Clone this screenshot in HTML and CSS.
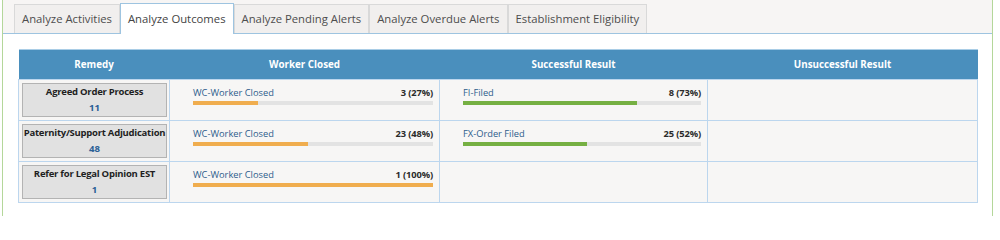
FILE: index.html
```html
<!DOCTYPE html>
<html>
<head>
<meta charset="utf-8">
<link rel="stylesheet" href="styles.css">
</head>
<body>
<div class="panel">
  <div class="tabs">
    <div class="tab">Analyze Activities</div>
    <div class="tab active">Analyze Outcomes</div>
    <div class="tab">Analyze Pending Alerts</div>
    <div class="tab">Analyze Overdue Alerts</div>
    <div class="tab">Establishment Eligibility</div>
  </div>
  <div class="content">
    <table class="outcomes">
      <colgroup>
        <col class="c-remedy">
        <col class="c-data">
        <col class="c-data2">
        <col class="c-data">
      </colgroup>
      <thead>
        <tr>
          <th>Remedy</th>
          <th>Worker Closed</th>
          <th>Successful Result</th>
          <th>Unsuccessful Result</th>
        </tr>
      </thead>
      <tbody>
        <tr>
          <td class="remedy"><div class="rbox"><div class="rname">Agreed Order Process</div><div class="rnum">11</div></div></td>
          <td class="bar-cell">
            <div class="bar-head"><span class="blabel">WC-Worker Closed</span><span class="bcount">3 (27%)</span></div>
            <div class="track"><div class="fill orange" style="width:27%"></div></div>
          </td>
          <td class="bar-cell">
            <div class="bar-head"><span class="blabel">FI-Filed</span><span class="bcount">8 (73%)</span></div>
            <div class="track"><div class="fill green" style="width:73%"></div></div>
          </td>
          <td class="bar-cell"></td>
        </tr>
        <tr>
          <td class="remedy"><div class="rbox"><div class="rname">Paternity/Support Adjudication</div><div class="rnum">48</div></div></td>
          <td class="bar-cell">
            <div class="bar-head"><span class="blabel">WC-Worker Closed</span><span class="bcount">23 (48%)</span></div>
            <div class="track"><div class="fill orange" style="width:48%"></div></div>
          </td>
          <td class="bar-cell">
            <div class="bar-head"><span class="blabel">FX-Order Filed</span><span class="bcount">25 (52%)</span></div>
            <div class="track"><div class="fill green" style="width:52%"></div></div>
          </td>
          <td class="bar-cell"></td>
        </tr>
        <tr>
          <td class="remedy"><div class="rbox"><div class="rname">Refer for Legal Opinion EST</div><div class="rnum">1</div></div></td>
          <td class="bar-cell">
            <div class="bar-head"><span class="blabel">WC-Worker Closed</span><span class="bcount">1 (100%)</span></div>
            <div class="track"><div class="fill orange" style="width:100%"></div></div>
          </td>
          <td class="bar-cell"></td>
          <td class="bar-cell"></td>
        </tr>
      </tbody>
    </table>
  </div>
</div>
</body>
</html>
```
FILE: styles.css
```css
html, body {
  margin: 0;
  padding: 0;
  background: #ffffff;
}
body {
  font-family: "Open Sans", "DejaVu Sans", sans-serif;
  color: #333;
}
.panel {
  margin-left: 2px;
  width: 991px;
  height: 216px;
  box-sizing: border-box;
  border-left: 1px solid #b4d79a;
  border-right: 1px solid #b4d79a;
  background: #ffffff;
  overflow: hidden;
}
.tabs {
  display: flex;
  align-items: flex-end;
  height: 34px;
  box-sizing: border-box;
  padding-left: 11px;
  background: #f7f5f4;
  border-bottom: 1px solid #9ec4e0;
}
.tab {
  height: 29px;
  box-sizing: border-box;
  padding: 0 7px;
  line-height: 28px;
  font-size: 11.3px;
  color: #4d4d4d;
  background: #f1efee;
  border: 1px solid #d9d9d9;
  border-bottom: none;
  white-space: nowrap;
}
.tab.active {
  height: 31px;
  margin-bottom: -1px;
  line-height: 30px;
  background: #ffffff;
  color: #444;
  border-color: #9ec4e0;
}
.content {
  padding: 15px;
}
.outcomes {
  width: 959px;
  border-collapse: collapse;
  table-layout: fixed;
}
.c-remedy { width: 151px; }
.c-data { width: 270px; }
.c-data2 { width: 268px; }
.outcomes th {
  height: 30px;
  box-sizing: border-box;
  padding: 0;
  background: #4a8fbd;
  border-top: 1px solid #a9cde6;
  color: #ffffff;
  font-size: 9.8px;
  font-weight: bold;
  text-align: center;
  vertical-align: middle;
}
.outcomes td {
  background: #f7f6f5;
  border: 1px solid #bcd6ee;
  vertical-align: top;
}
.remedy {
  padding: 3px 2px 3px 3px;
}
.rbox {
  background: #e1e1e1;
  border: 1px solid #b3b3b3;
  padding: 1px 0 0;
  text-align: center;
  font-weight: bold;
}
.rname {
  line-height: 14px;
  font-size: 9.5px;
  letter-spacing: -0.25px;
  color: #1f1f1f;
  white-space: nowrap;
}
.rnum {
  line-height: 17px;
  font-size: 9.6px;
  color: #2a5f96;
}
.bar-cell {
  padding: 6px 6px 0 23px;
}
.bar-head {
  display: flex;
  justify-content: space-between;
  line-height: 14px;
  font-size: 9.3px;
}
.blabel {
  color: #2d5d8c;
}
.bcount {
  font-weight: bold;
  color: #2b2b2b;
  font-size: 9.3px;
  letter-spacing: -0.1px;
}
.track {
  margin-top: 1px;
  height: 4px;
  background: #e3e3e3;
}
.fill {
  height: 100%;
}
.orange { background: #f0ad4e; }
.green { background: #76b043; }
```
